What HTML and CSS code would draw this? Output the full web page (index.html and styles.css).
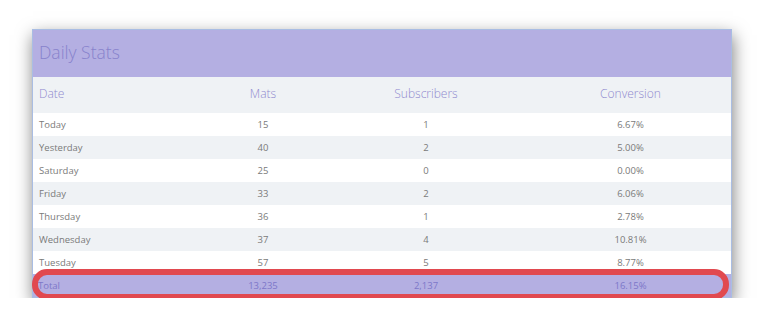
FILE: index.html
```html
<!DOCTYPE html>
<html>
<head>
<meta charset="utf-8">
<link rel="stylesheet" href="styles.css">
</head>
<body>
<div class="card">
  <div class="title">Daily Stats</div>
  <table class="stats">
    <colgroup>
      <col class="c1"><col class="c2"><col class="c3"><col class="c4">
    </colgroup>
    <thead>
      <tr><th class="left">Date</th><th>Mats</th><th>Subscribers</th><th>Conversion</th></tr>
    </thead>
    <tbody>
      <tr><td class="left">Today</td><td>15</td><td>1</td><td>6.67%</td></tr>
      <tr class="alt"><td class="left">Yesterday</td><td>40</td><td>2</td><td>5.00%</td></tr>
      <tr><td class="left">Saturday</td><td>25</td><td>0</td><td>0.00%</td></tr>
      <tr class="alt"><td class="left">Friday</td><td>33</td><td>2</td><td>6.06%</td></tr>
      <tr><td class="left">Thursday</td><td>36</td><td>1</td><td>2.78%</td></tr>
      <tr class="alt"><td class="left">Wednesday</td><td>37</td><td>4</td><td>10.81%</td></tr>
      <tr><td class="left">Tuesday</td><td>57</td><td>5</td><td>8.77%</td></tr>
      <tr class="total"><td class="left">Total</td><td>13,235</td><td>2,137</td><td>16.15%</td></tr>
    </tbody>
  </table>
  <div class="highlight"></div>
</div>
</body>
</html>
```

FILE: styles.css
```css
html, body {
  margin: 0;
  padding: 0;
  background: #ffffff;
}
body {
  padding: 29px 0 0 32px;
  font-family: "Open Sans", "Noto Sans", sans-serif;
}
.card {
  position: relative;
  width: 700px;
  box-sizing: border-box;
  border: 1px solid #a9bde3;
  background: #ffffff;
  box-shadow: 1px 6px 16px rgba(0, 0, 0, 0.5);
}
.title {
  height: 47px;
  background: #b4afe2;
  color: #8782cc;
  font-size: 17.5px;
  font-weight: 300;
  line-height: 44px;
  padding-left: 6px;
}
.stats {
  width: 100%;
  border-collapse: collapse;
  table-layout: fixed;
}
.c1 { width: 171px; }
.c2 { width: 118px; }
.c3 { width: 208px; }
.c4 { width: auto; }
.stats th {
  height: 32px;
  padding: 0 0 4px 0;
  background: #eff2f5;
  color: #8f8acf;
  font-size: 12px;
  font-weight: 300;
  text-align: center;
}
.stats td {
  height: 23px;
  padding: 0;
  color: #7a7a7a;
  font-size: 9.5px;
  font-weight: 400;
  text-align: center;
}
.stats .left {
  text-align: left;
  padding-left: 6px;
}
.stats tr.alt td {
  background: #eff2f5;
}
.stats tr.total td {
  background: #b4afe2;
  color: #7d77c9;
}
.stats tr.total td.left {
  padding-left: 5px;
}
.highlight {
  position: absolute;
  left: -1px;
  top: 239px;
  width: 697px;
  height: 31px;
  box-sizing: border-box;
  border: 6px solid #e1494f;
  border-radius: 15px;
}
```
